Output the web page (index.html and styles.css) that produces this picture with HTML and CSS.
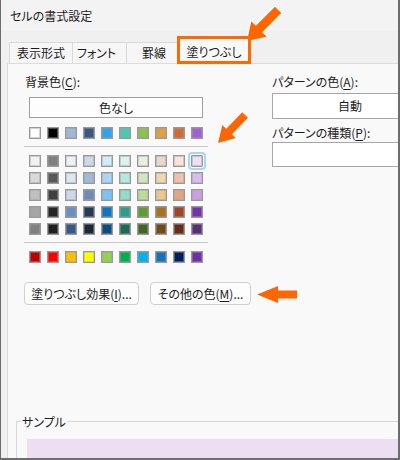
FILE: index.html
```html
<!DOCTYPE html>
<html lang="ja">
<head>
<meta charset="utf-8">
<title>セルの書式設定</title>
<link rel="stylesheet" href="styles.css">
</head>
<body>
<div class="window">
  <div class="titlebar">セルの書式設定</div>
  <div class="tabs">
    <div class="tab t1">表示形式</div>
    <div class="tab t2">フォント</div>
    <div class="tab t3">罫線</div>
    <div class="tab active">塗りつぶし</div>
  </div>
  <div class="panel">
    <div class="top">
      <div class="left">
        <div class="label">背景色(<u>C</u>):</div>
        <div class="nocolor">色なし</div>
        <div class="palette">
          <div class="row">
            <span class="sw" style="background:#ffffff"></span>
            <span class="sw" style="background:#000000"></span>
            <span class="sw" style="background:#a0b7d6"></span>
            <span class="sw" style="background:#3a5880"></span>
            <span class="sw" style="background:#2fa4ee"></span>
            <span class="sw" style="background:#48c9b0"></span>
            <span class="sw" style="background:#8cc152"></span>
            <span class="sw" style="background:#dea040"></span>
            <span class="sw" style="background:#d06a36"></span>
            <span class="sw" style="background:#a35fd6"></span>
          </div>
          <div class="sep"></div>
          <div class="grid">
            <span class="sw" style="background:#f2f2f2"></span>
            <span class="sw" style="background:#7f7f7f"></span>
            <span class="sw" style="background:#eef2f8"></span>
            <span class="sw" style="background:#ccd9e8"></span>
            <span class="sw" style="background:#d4ebfb"></span>
            <span class="sw" style="background:#d9f3ef"></span>
            <span class="sw" style="background:#e6f2dc"></span>
            <span class="sw dots" style="background-color:#fae9d9"></span>
            <span class="sw" style="background:#fae4d6"></span>
            <span class="sw selected" style="background:#ede0f6"></span>

            <span class="sw" style="background:#d9d9d9"></span>
            <span class="sw" style="background:#595959"></span>
            <span class="sw" style="background:#dde6f1"></span>
            <span class="sw" style="background:#a3b9d6"></span>
            <span class="sw" style="background:#a8d6f7"></span>
            <span class="sw" style="background:#b5e8df"></span>
            <span class="sw" style="background:#d1e6bd"></span>
            <span class="sw" style="background:#f2d7ae"></span>
            <span class="sw" style="background:#eec1ab"></span>
            <span class="sw" style="background:#dabdef"></span>

            <span class="sw" style="background:#bfbfbf"></span>
            <span class="sw" style="background:#404040"></span>
            <span class="sw" style="background:#cbd8e8"></span>
            <span class="sw" style="background:#6d8cbd"></span>
            <span class="sw" style="background:#7cc2f2"></span>
            <span class="sw" style="background:#91dccb"></span>
            <span class="sw" style="background:#badb9a"></span>
            <span class="sw" style="background:#ecc68a"></span>
            <span class="sw" style="background:#e4a583"></span>
            <span class="sw" style="background:#c8a0e6"></span>

            <span class="sw" style="background:#a5a5a5"></span>
            <span class="sw" style="background:#262626"></span>
            <span class="sw" style="background:#6c8fc1"></span>
            <span class="sw" style="background:#253a57"></span>
            <span class="sw" style="background:#0c75c4"></span>
            <span class="sw" style="background:#2a9e86"></span>
            <span class="sw" style="background:#639a34"></span>
            <span class="sw" style="background:#a87023"></span>
            <span class="sw" style="background:#9d4726"></span>
            <span class="sw" style="background:#7433ab"></span>

            <span class="sw" style="background:#7f7f7f"></span>
            <span class="sw dots" style="background-color:#0d0d0d"></span>
            <span class="sw" style="background:#375a85"></span>
            <span class="sw" style="background:#1b2638"></span>
            <span class="sw" style="background:#0c4d80"></span>
            <span class="sw" style="background:#1d6a59"></span>
            <span class="sw" style="background:#426724"></span>
            <span class="sw" style="background:#704b17"></span>
            <span class="sw" style="background:#642f19"></span>
            <span class="sw dots" style="background-color:#4d1f72"></span>
          </div>
          <div class="sep"></div>
          <div class="row std">
            <span class="sw" style="background:#c00000"></span>
            <span class="sw" style="background:#ff0000"></span>
            <span class="sw" style="background:#ffc000"></span>
            <span class="sw" style="background:#ffff00"></span>
            <span class="sw" style="background:#92d050"></span>
            <span class="sw" style="background:#00b050"></span>
            <span class="sw" style="background:#00b0f0"></span>
            <span class="sw dots" style="background-color:#0070c0"></span>
            <span class="sw" style="background:#002060"></span>
            <span class="sw" style="background:#7030a0"></span>
          </div>
        </div>
        <div class="buttons">
          <div class="btn b1">塗りつぶし効果(<u>I</u>)...</div>
          <div class="btn b2">その他の色(<u>M</u>)...</div>
        </div>
      </div>
      <div class="right">
        <div class="label">パターンの色(<u>A</u>):</div>
        <div class="combo c1">自動</div>
        <div class="label l2">パターンの種類(<u>P</u>):</div>
        <div class="combo c2"></div>
      </div>
    </div>
    <div class="group">
      <span class="legend">サンプル</span>
      <div class="sample"></div>
    </div>
  </div>
  <svg class="arrows" width="400" height="460" viewBox="0 0 400 460" aria-hidden="true">
    <g fill="#ff6600" stroke="#ffffff" stroke-width="3" stroke-linejoin="round" paint-order="stroke">
      <polygon transform="translate(247,41) rotate(-45)" points="0,0 17,-11 17,-4.5 44,-4.5 44,4.5 17,4.5 17,11"/>
      <polygon transform="translate(218,143) rotate(-46)" points="0,0 16,-9.5 16,-4 39,-4 39,4 16,4 16,9.5"/>
      <polygon transform="translate(257,294.5)" points="0,0 21,-8.5 21,-4 40,-4 40,4 21,4 21,8.5"/>
    </g>
  </svg>
</div>
</body>
</html>
```

FILE: styles.css
```css
html, body {
  margin: 0;
  padding: 0;
  background: #ffffff;
}

.window {
  position: relative;
  width: 400px;
  height: 460px;
  box-sizing: border-box;
  border-left: 1px solid #6d6d6d;
  border-right: 2px solid #6d6d6d;
  border-bottom: 2px solid #6d6d6d;
  background: #f0f0f0;
  overflow: hidden;
  display: flex;
  flex-direction: column;
  font-family: "Noto Sans CJK JP", "Noto Sans", sans-serif;
  font-feature-settings: "palt";
  font-size: 12px;
  color: #1b1b1b;
}

.titlebar {
  height: 31px;
  line-height: 31px;
  padding-left: 9px;
  background: #f3f3f3;
  flex-shrink: 0;
}

.tabs {
  height: 32px;
  display: flex;
  align-items: flex-end;
  padding-left: 8px;
  flex-shrink: 0;
}

.tab {
  box-sizing: border-box;
  height: 21px;
  line-height: 20px;
  text-align: center;
  border: 1px solid #d9d9d9;
  border-bottom: none;
  border-right: none;
  background: #f6f6f6;
}

.t1 { width: 63px; }
.t2 { width: 54px; padding-right: 6px; }
.t3 { width: 51px; padding-left: 4px; }

.tab.active {
  position: relative;
  z-index: 1;
  width: 74px;
  height: 28px;
  margin-bottom: -1px;
  border: 3px solid #ff6a00;
  background: #f9f9f9;
  line-height: 16px;
  padding-top: 5px;
}

.panel {
  flex: 1;
  margin-left: 6px;
  border-top: 1px solid #dcdcdc;
  border-left: 1px solid #dcdcdc;
  background: #f9f9f9;
  display: flex;
  flex-direction: column;
}

.top {
  display: flex;
}

.left {
  box-sizing: border-box;
  width: 264px;
  flex-shrink: 0;
  padding-left: 17px;
  padding-top: 10px;
}

.label {
  line-height: 16px;
}

.label u {
  text-decoration-thickness: 1px;
  text-underline-offset: 2px;
}

.nocolor {
  box-sizing: border-box;
  width: 174px;
  height: 21px;
  line-height: 19px;
  margin-top: 7px;
  margin-left: 4px;
  border: 1px solid #a0a0a0;
  background: #fdfdfd;
  text-align: center;
}

.palette {
  width: 174px;
  margin-left: 4px;
  margin-top: 9px;
}

.row {
  display: flex;
  gap: 6px;
}

.grid {
  display: grid;
  grid-template-columns: repeat(10, 12px);
  column-gap: 6px;
  row-gap: 5px;
  margin-top: 8px;
}

.std {
  margin-top: 8px;
}

.sep {
  height: 1px;
  background: #c8c8c8;
  margin: 7px -5px 0 -5px;
}

.sw {
  display: block;
  width: 12px;
  height: 12px;
  box-sizing: border-box;
  border: 1px solid #999999;
  box-shadow: inset 0 0 0 1px rgba(160, 160, 160, 0.45);
}

.sw.dots {
  background-image: radial-gradient(circle, rgba(128, 128, 128, 0.35) 0.6px, transparent 0.8px);
  background-size: 2px 2px;
}

.sw.selected {
  outline: 2px solid #a9d6f8;
  outline-offset: 1px;
  border-radius: 1px;
}

.buttons {
  display: flex;
  gap: 11px;
  margin-top: 19px;
  margin-left: -1px;
}

.btn {
  box-sizing: border-box;
  height: 23px;
  line-height: 21px;
  border: 1px solid #d0d0d0;
  border-radius: 4px;
  background: #fdfdfd;
  text-align: center;
}

.btn u {
  text-decoration-thickness: 1px;
  text-underline-offset: 2px;
}

.b1 { width: 115px; }
.b2 { width: 101px; }

.right {
  padding-top: 10px;
  flex-shrink: 0;
}

.combo {
  box-sizing: border-box;
  width: 160px;
  border: 1px solid #a6a6a6;
  background: #ffffff;
  text-align: center;
  padding-right: 4px;
}

.c1 {
  height: 26px;
  line-height: 24px;
  margin-top: 3px;
}

.l2 {
  margin-top: 6px;
}

.c2 {
  height: 25px;
  margin-top: 1px;
}

.group {
  margin-top: 116px;
  margin-left: 8px;
  border-top: 1px solid #d6d6d6;
  border-left: 1px solid #d6d6d6;
  flex: 1;
  display: flex;
  flex-direction: column;
  align-items: flex-start;
}

.legend {
  display: block;
  margin-top: -8px;
  margin-left: 4px;
  padding: 0 1px;
  line-height: 16px;
  background: #f9f9f9;
}

.sample {
  align-self: stretch;
  flex: 1;
  margin-top: 9px;
  margin-left: 10px;
  background: #ecdff4;
}

.arrows {
  position: absolute;
  left: -1px;
  top: 0;
  pointer-events: none;
}
```
